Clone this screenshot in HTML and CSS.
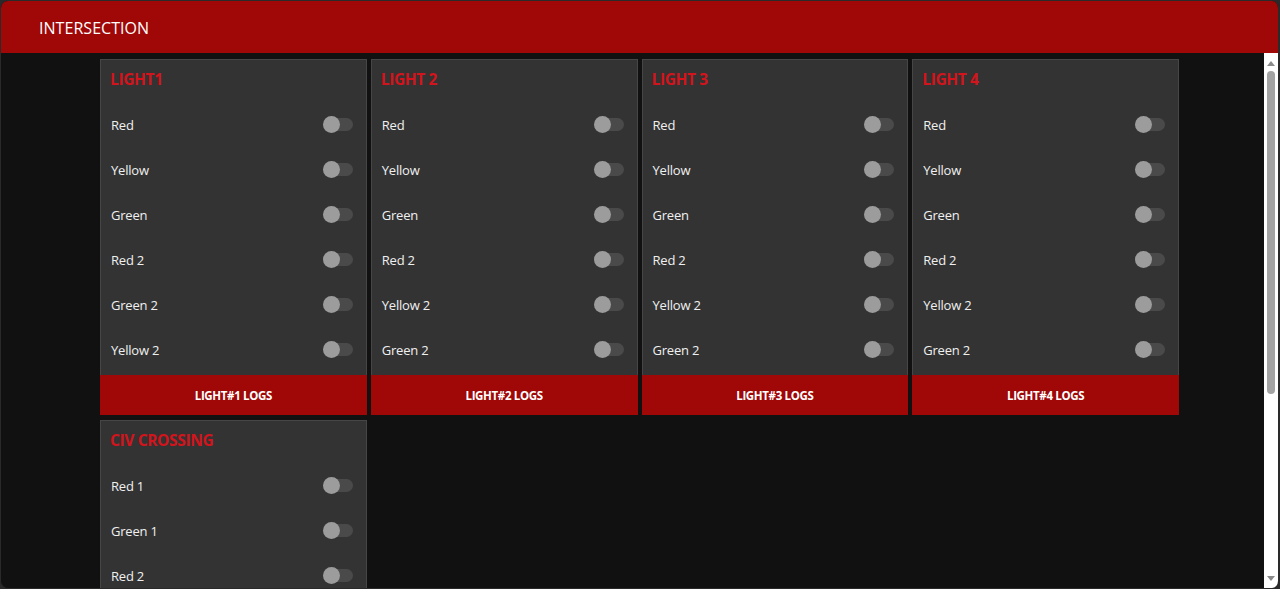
FILE: index.html
```html
<!DOCTYPE html>
<html lang="en">
<head>
<meta charset="utf-8">
<title>Intersection</title>
<link rel="stylesheet" href="styles.css">
</head>
<body>
<div class="app">
  <header class="topbar">INTERSECTION</header>
  <div class="body">
    <main class="content">
      <div class="grid">
        <section class="card">
          <h2 class="card-title">LIGHT1</h2>
          <ul class="rows">
            <li class="row"><span>Red</span><span class="toggle"></span></li>
            <li class="row"><span>Yellow</span><span class="toggle"></span></li>
            <li class="row"><span>Green</span><span class="toggle"></span></li>
            <li class="row"><span>Red 2</span><span class="toggle"></span></li>
            <li class="row"><span>Green 2</span><span class="toggle"></span></li>
            <li class="row"><span>Yellow 2</span><span class="toggle"></span></li>
          </ul>
          <button class="logs">LIGHT#1 LOGS</button>
        </section>
        <section class="card">
          <h2 class="card-title">LIGHT 2</h2>
          <ul class="rows">
            <li class="row"><span>Red</span><span class="toggle"></span></li>
            <li class="row"><span>Yellow</span><span class="toggle"></span></li>
            <li class="row"><span>Green</span><span class="toggle"></span></li>
            <li class="row"><span>Red 2</span><span class="toggle"></span></li>
            <li class="row"><span>Yellow 2</span><span class="toggle"></span></li>
            <li class="row"><span>Green 2</span><span class="toggle"></span></li>
          </ul>
          <button class="logs">LIGHT#2 LOGS</button>
        </section>
        <section class="card">
          <h2 class="card-title">LIGHT 3</h2>
          <ul class="rows">
            <li class="row"><span>Red</span><span class="toggle"></span></li>
            <li class="row"><span>Yellow</span><span class="toggle"></span></li>
            <li class="row"><span>Green</span><span class="toggle"></span></li>
            <li class="row"><span>Red 2</span><span class="toggle"></span></li>
            <li class="row"><span>Yellow 2</span><span class="toggle"></span></li>
            <li class="row"><span>Green 2</span><span class="toggle"></span></li>
          </ul>
          <button class="logs">LIGHT#3 LOGS</button>
        </section>
        <section class="card">
          <h2 class="card-title">LIGHT 4</h2>
          <ul class="rows">
            <li class="row"><span>Red</span><span class="toggle"></span></li>
            <li class="row"><span>Yellow</span><span class="toggle"></span></li>
            <li class="row"><span>Green</span><span class="toggle"></span></li>
            <li class="row"><span>Red 2</span><span class="toggle"></span></li>
            <li class="row"><span>Yellow 2</span><span class="toggle"></span></li>
            <li class="row"><span>Green 2</span><span class="toggle"></span></li>
          </ul>
          <button class="logs">LIGHT#4 LOGS</button>
        </section>
        <section class="card card-tall">
          <h2 class="card-title">CIV CROSSING</h2>
          <ul class="rows">
            <li class="row"><span>Red 1</span><span class="toggle"></span></li>
            <li class="row"><span>Green 1</span><span class="toggle"></span></li>
            <li class="row"><span>Red 2</span><span class="toggle"></span></li>
          </ul>
        </section>
      </div>
    </main>
    <div class="scrollbar">
      <span class="arrow-up"></span>
      <span class="thumb"></span>
      <span class="track-fill"></span>
      <span class="arrow-down"></span>
    </div>
  </div>
</div>
</body>
</html>
```

FILE: styles.css
```css
* { box-sizing: border-box; }
html, body {
  margin: 0;
  padding: 0;
  height: 100%;
  background: #2a2a2a;
  overflow: hidden;
}
body {
  font-family: "Open Sans", "Noto Sans", sans-serif;
}
.app {
  height: 589px;
  width: 1280px;
  display: flex;
  flex-direction: column;
  border: 1px solid #2a2a2a;
  border-right-width: 2px;
  border-radius: 8px;
  overflow: hidden;
  background: #111111;
}
.topbar {
  height: 52px;
  flex: none;
  background: #a00707;
  color: #ffffff;
  font-size: 16px;
  line-height: 54px;
  padding-left: 38px;
  letter-spacing: 0.05px;
}
.body {
  flex: 1;
  display: flex;
  min-height: 0;
}
.content {
  flex: 1;
  overflow: hidden;
  padding: 6px 0 0 99px;
}
.grid {
  width: 1079px;
  display: grid;
  grid-template-columns: repeat(4, 1fr);
  column-gap: 4px;
  row-gap: 5px;
}
.card {
  background: #333333;
  border: 1px solid #464646;
  display: flex;
  flex-direction: column;
}
.card-tall {
  min-height: 200px;
}
.card-title {
  margin: 0;
  height: 42px;
  padding: 9px 10px 0 9px;
  font-size: 15.5px;
  font-weight: 700;
  line-height: 20px;
  color: #d4141c;
  letter-spacing: -0.35px;
}
.rows {
  list-style: none;
  margin: 0;
  padding: 0;
}
.row {
  height: 45px;
  display: flex;
  align-items: center;
  justify-content: space-between;
  padding: 0 13px 0 10px;
  color: #f0f0f0;
  font-size: 13px;
  letter-spacing: -0.2px;
}
.toggle {
  position: relative;
  width: 30px;
  height: 17px;
  margin-top: -1px;
}
.toggle::before {
  content: "";
  position: absolute;
  left: 6px;
  right: 0;
  top: 2px;
  height: 13px;
  border-radius: 7px;
  background: #4a4a4a;
}
.toggle::after {
  content: "";
  position: absolute;
  left: 0;
  top: 0;
  width: 17px;
  height: 17px;
  border-radius: 50%;
  background: #9c9c9c;
}
.logs {
  margin: 3px -1px -1px;
  height: 40px;
  border: 0;
  background: #a00707;
  color: #ffffff;
  font-family: inherit;
  font-size: 11.5px;
  font-weight: 700;
  letter-spacing: -0.35px;
  padding-top: 1px;
  cursor: pointer;
}
.scrollbar {
  flex: none;
  width: 14px;
  background: #ffffff;
  display: flex;
  flex-direction: column;
  align-items: center;
  padding: 8px 0 7px;
}
.arrow-up, .arrow-down {
  width: 0;
  height: 0;
  border-left: 4px solid transparent;
  border-right: 4px solid transparent;
  flex: none;
}
.arrow-up {
  border-bottom: 5px solid #8a8a8a;
}
.arrow-down {
  border-top: 5px solid #8a8a8a;
}
.thumb {
  flex: none;
  margin-top: 5px;
  width: 8px;
  height: 323px;
  border-radius: 4px;
  background: #a3a3a3;
}
.track-fill {
  flex: 1;
}
```
